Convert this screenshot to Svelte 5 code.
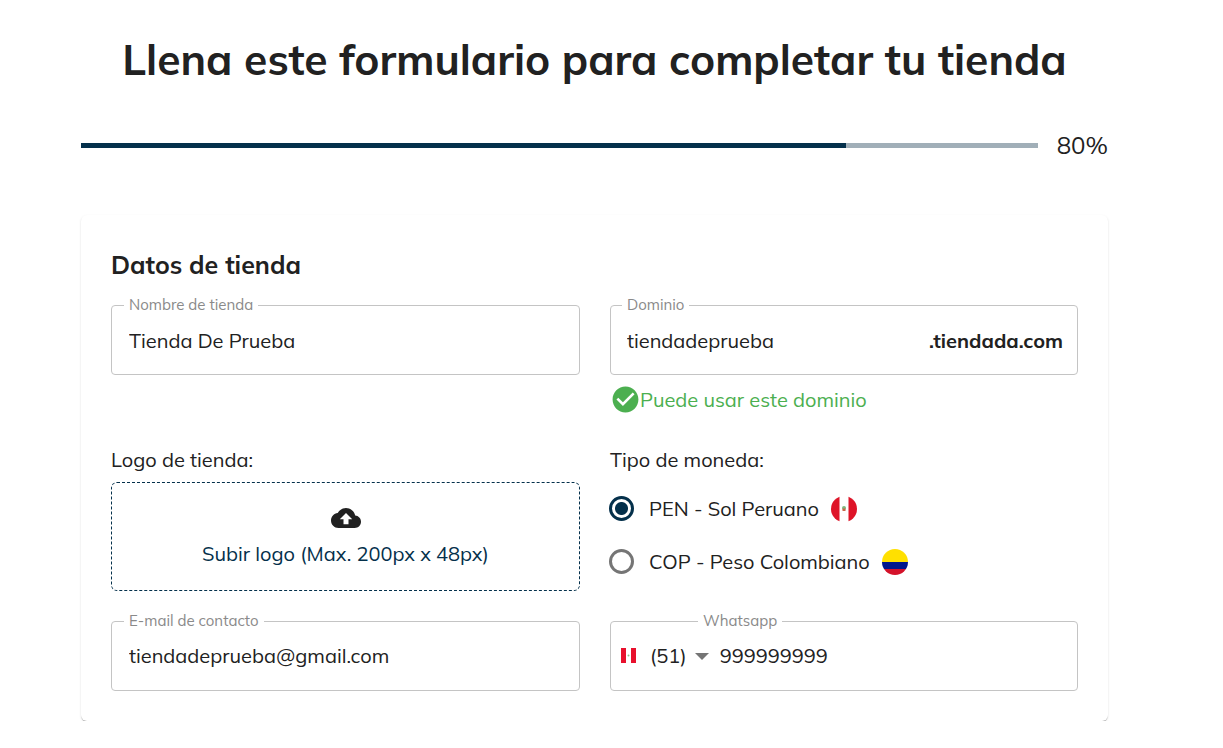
<script>
	let currency = $state('PEN');
	const progress = 80;
</script>

<main>
	<h1>Llena este formulario para completar tu tienda</h1>

	<div class="progress">
		<div class="track"><div class="fill" style="width: {progress}%"></div></div>
		<span class="percent">{progress}%</span>
	</div>

	<section class="card">
		<h2>Datos de tienda</h2>
		<div class="form-grid">
			<fieldset class="field">
				<legend>Nombre de tienda</legend>
				<input value="Tienda De Prueba" aria-label="Nombre de tienda" />
			</fieldset>

			<div>
				<fieldset class="field domain">
					<legend>Dominio</legend>
					<input value="tiendadeprueba" aria-label="Dominio" />
					<span class="suffix">.tiendada.com</span>
				</fieldset>
				<p class="helper">
					<svg viewBox="0 0 24 24" width="31" height="31" aria-hidden="true">
						<path fill="#4caf50" d="M12 2C6.48 2 2 6.48 2 12s4.48 10 10 10 10-4.48 10-10S17.52 2 12 2zm-2 15l-5-5 1.41-1.41L10 14.17l7.59-7.59L19 8l-9 9z" />
					</svg>
					Puede usar este dominio
				</p>
			</div>

			<div class="logo-col">
				<span class="label">Logo de tienda:</span>
				<button class="upload" type="button">
					<svg viewBox="0 0 24 24" width="30" height="30" aria-hidden="true">
						<path fill="#212121" d="M19.35 10.04C18.67 6.59 15.64 4 12 4 9.11 4 6.6 5.64 5.35 8.04 2.34 8.36 0 10.91 0 14c0 3.31 2.69 6 6 6h13c2.76 0 5-2.24 5-5 0-2.64-2.05-4.78-4.65-4.96zM14 13v4h-4v-4H7l5-5 5 5h-3z" />
					</svg>
					<span>Subir logo (Max. 200px x 48px)</span>
				</button>
			</div>

			<div class="currency-col">
				<span class="label">Tipo de moneda:</span>
				<div class="radios">
					<label class="radio">
						<input type="radio" bind:group={currency} value="PEN" />
						<span class="dot"></span>
						<span>PEN - Sol Peruano</span>
						<svg class="flag" viewBox="0 0 26 26" width="26" height="26" aria-hidden="true">
							<clipPath id="peru"><circle cx="13" cy="13" r="13" /></clipPath>
							<g clip-path="url(#peru)">
								<rect width="26" height="26" fill="#fff" />
								<rect width="8.5" height="26" fill="#de1428" />
								<rect x="17.5" width="8.5" height="26" fill="#de1428" />
								<circle cx="13" cy="12" r="2" fill="#7fb77e" />
								<rect x="11.5" y="12.5" width="3" height="2.5" fill="#c9674a" />
							</g>
						</svg>
					</label>
					<label class="radio">
						<input type="radio" bind:group={currency} value="COP" />
						<span class="dot"></span>
						<span>COP - Peso Colombiano</span>
						<svg class="flag" viewBox="0 0 26 26" width="26" height="26" aria-hidden="true">
							<clipPath id="colombia"><circle cx="13" cy="13" r="13" /></clipPath>
							<g clip-path="url(#colombia)">
								<rect width="26" height="13" fill="#ffe000" />
								<rect y="13" width="26" height="7" fill="#00168c" />
								<rect y="20" width="26" height="6" fill="#d4122a" />
							</g>
						</svg>
					</label>
				</div>
			</div>

			<fieldset class="field contact">
				<legend>E-mail de contacto</legend>
				<input value="tiendadeprueba@gmail.com" aria-label="E-mail de contacto" />
			</fieldset>

			<fieldset class="field phone">
				<legend>Whatsapp</legend>
				<svg class="mini-flag" viewBox="0 0 15 15" width="15" height="15" aria-hidden="true">
					<rect width="15" height="15" fill="#e8112d" />
					<rect x="5" width="5" height="15" fill="#fff" />
					<circle cx="7.5" cy="7.5" r="1" fill="#8fbf8f" />
				</svg>
				<span class="code">(51)</span>
				<span class="caret"></span>
				<input value="999999999" aria-label="Whatsapp" />
			</fieldset>
		</div>
	</section>
</main>

<style>
	:global(body) {
		background: #fff;
		font-family: "Mulish", "Nunito", "Lato", sans-serif;
		color: #212121;
	}

	main {
		width: 1027px;
		margin: 0 0 0 81px;
		padding-top: 35px;
	}

	h1 {
		margin: 0;
		font-size: 42.5px;
		line-height: 48px;
		font-weight: 700;
		text-align: center;
		color: #212121;
	}

	.progress {
		display: flex;
		align-items: center;
		gap: 19px;
		margin-top: 48px;
	}

	.track {
		flex: 1;
		height: 5px;
		background: #a1afb8;
	}

	.fill {
		height: 100%;
		background: #04304b;
	}

	.percent {
		font-size: 24px;
		line-height: 28px;
	}

	.card {
		margin-top: 56px;
		padding: 35px 30px 0;
		height: 506px;
		box-sizing: border-box;
		border-radius: 6px;
		background: #fff;
		box-shadow: 0 2px 1px -1px rgba(0, 0, 0, 0.2), 0 1px 1px 0 rgba(0, 0, 0, 0.14), 0 1px 3px 0 rgba(0, 0, 0, 0.08);
	}

	h2 {
		margin: 0;
		font-size: 25px;
		line-height: 30px;
		font-weight: 700;
	}

	.form-grid {
		display: grid;
		grid-template-columns: 469px 468px;
		column-gap: 30px;
		margin-top: 18px;
	}

	.field {
		display: flex;
		align-items: center;
		height: 77px;
		box-sizing: border-box;
		margin: 0;
		padding: 0 17px 6px;
		border: 1px solid #c4c4c4;
		border-radius: 4px;
		min-width: 0;
	}

	legend {
		margin-left: -5px;
		padding: 0 5px;
		font-size: 15px;
		line-height: 14px;
		color: #8a8a8a;
	}

	.field input {
		flex: 1;
		min-width: 0;
		border: 0;
		padding: 0;
		outline: 0;
		background: transparent;
		font: inherit;
		font-size: 20px;
		color: #212121;
	}

	.domain {
		padding-left: 16px;
	}

	.suffix {
		font-size: 20px;
		font-weight: 700;
		margin-right: -3px;
	}

	.helper {
		display: flex;
		align-items: center;
		margin: 9px 0 0 0;
		font-size: 20px;
		line-height: 31px;
		color: #4caf50;
	}

	.helper svg {
		margin-right: -1px;
	}

	.logo-col,
	.currency-col {
		margin-top: 33px;
	}

	.label {
		display: block;
		font-size: 20px;
		line-height: 24px;
	}

	.upload {
		display: flex;
		flex-direction: column;
		align-items: center;
		gap: 8px;
		width: 100%;
		height: 109px;
		margin-top: 10px;
		padding: 20px 0 0;
		border: 1px dashed #04304b;
		border-radius: 6px;
		background: transparent;
		font: inherit;
		font-size: 20px;
		line-height: 25px;
		color: #04304b;
		cursor: pointer;
	}

	.radios {
		margin-top: 10px;
	}

	.radio {
		display: flex;
		align-items: center;
		height: 53px;
		font-size: 20px;
		cursor: pointer;
	}

	.radio input {
		position: absolute;
		opacity: 0;
	}

	.dot {
		width: 25px;
		height: 25px;
		box-sizing: border-box;
		margin: 0 15px 0 -1px;
		border: 3px solid #757575;
		border-radius: 50%;
	}

	.radio input:checked + .dot {
		border-color: #04304b;
		background: radial-gradient(circle, #04304b 0 6px, transparent 7px);
	}

	.flag {
		margin-left: 12px;
	}

	.contact,
	.phone {
		margin-top: 23px;
		padding-bottom: 8px;
	}

	.phone {
		padding-left: 10px;
		padding-right: 10px;
	}

	.phone legend {
		margin-left: 77px;
	}

	.mini-flag {
		margin-right: 14px;
	}

	.code {
		font-size: 20px;
	}

	.caret {
		width: 0;
		height: 0;
		margin: 2px 11px 0 8px;
		border-left: 7px solid transparent;
		border-right: 7px solid transparent;
		border-top: 7px solid #757575;
	}
</style>
